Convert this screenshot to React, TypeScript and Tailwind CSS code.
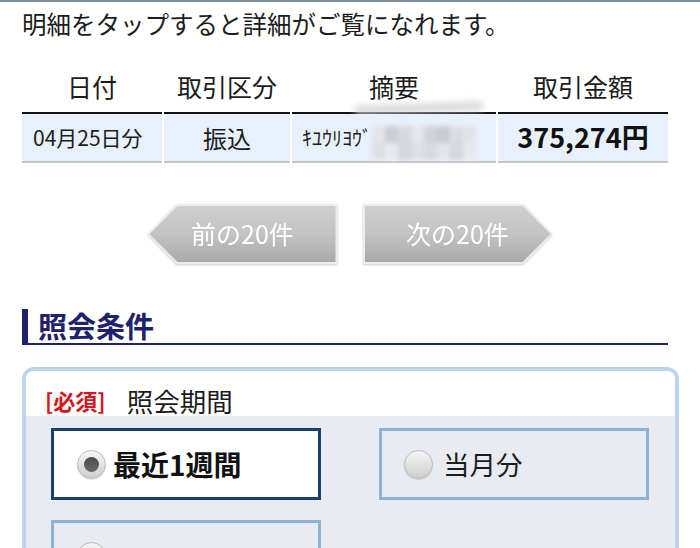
import React from "react";

const mosaic = [
  "bg-[#e4e5eb]", "bg-[#cdced5]", "bg-[#d8d9df]", "bg-[#e6e7ec]", "bg-[#d1d2d9]", "bg-[#cbccd3]", "bg-[#dcdde3]", "bg-[#e3e4e9]",
  "bg-[#dfe0e6]", "bg-[#e8e9ee]", "bg-[#d5d6dc]", "bg-[#e0e1e6]", "bg-[#d9dae0]", "bg-[#e5e6ea]", "bg-[#d6d7dd]", "bg-[#e7e8ec]",
];

function Radio({ checked }: { checked?: boolean }) {
  return (
    <span className="w-[29px] h-[29px] shrink-0 rounded-full border border-[#b9b9b9] bg-linear-to-b from-[#f7f7f7] to-[#cdcdcd] shadow-[0_1px_1px_rgba(0,0,0,0.12)] flex items-center justify-center">
      {checked && <span className="w-[15px] h-[15px] rounded-full bg-linear-to-b from-[#4a4a4a] to-[#6a6a6a]" />}
    </span>
  );
}

export default function App() {
  return (
    <div className="w-[700px] h-[548px] overflow-hidden bg-white border-t-2 border-[#7a8d9b] font-['Noto_Sans_CJK_JP','Noto_Sans',sans-serif] text-[#1c1c1c]">
      <div className="px-[22px]">
        <p className="mt-[5px] text-[24.5px] leading-[34px]">明細をタップすると詳細がご覧になれます。</p>

        <div className="mt-[21px] w-[646px]">
          <div className="flex gap-[2px] text-[25px]">
            <div className="w-[140px] h-[52px] border-b-2 border-[#111] flex items-center justify-center">日付</div>
            <div className="w-[126px] h-[52px] border-b-2 border-[#111] flex items-center justify-center">取引区分</div>
            <div className="relative w-[204px] h-[52px] border-b-2 border-[#111] flex items-center justify-center">
              摘要
              <span className="absolute left-[62px] bottom-[-1px] w-[130px] h-[10px] rounded-full bg-[#d4d4d4] blur-[3px] opacity-80 rotate-[-2deg]" />
            </div>
            <div className="w-[170px] h-[52px] border-b-2 border-[#111] flex items-center justify-center">取引金額</div>
          </div>
          <div className="flex gap-[2px]">
            <div className="w-[140px] h-[49px] border-b-2 border-[#c2c5c9] bg-[#e8f0fb] flex items-center pl-[11px] text-[21px]">04月25日分</div>
            <div className="w-[126px] h-[49px] border-b-2 border-[#c2c5c9] bg-[#e8f0fb] flex items-center justify-center text-[24px]">振込</div>
            <div className="relative w-[204px] h-[49px] border-b-2 border-[#c2c5c9] bg-[#e8f0fb] flex items-center pl-[10px] text-[20px]">
              ｷﾕｳﾘﾖｳﾞ
              <div className="absolute left-[80px] top-[12px] grid grid-cols-8 blur-[2px]">
                {mosaic.map((c, i) => (
                  <span key={i} className={`w-[13px] h-[17px] ${c}`} />
                ))}
              </div>
            </div>
            <div className="w-[170px] h-[49px] border-b-2 border-[#c2c5c9] bg-[#e8f0fb] flex items-center justify-center text-[27px] font-bold text-[#111]">375,274円</div>
          </div>
        </div>

        <div className="mt-[41px] flex justify-center gap-[25px] drop-shadow-[0_1px_1px_rgba(0,0,0,0.2)]">
          <div className="w-[190px] h-[60px] bg-[#ececec] p-[2px] [clip-path:polygon(29px_0,100%_0,100%_100%,29px_100%,0_50%)]">
            <div className="w-full h-full bg-linear-to-b from-[#cfcfcf] via-[#c3c3c3] to-[#a9a9a9] [clip-path:polygon(28px_0,100%_0,100%_100%,28px_100%,0_50%)] flex items-center justify-center text-white text-[25px]">
              前の20件
            </div>
          </div>
          <div className="w-[190px] h-[60px] bg-[#ececec] p-[2px] [clip-path:polygon(0_0,calc(100%-29px)_0,100%_50%,calc(100%-29px)_100%,0_100%)]">
            <div className="w-full h-full bg-linear-to-b from-[#cfcfcf] via-[#c3c3c3] to-[#a9a9a9] [clip-path:polygon(0_0,calc(100%-28px)_0,100%_50%,calc(100%-28px)_100%,0_100%)] flex items-center justify-center text-white text-[25px]">
              次の20件
            </div>
          </div>
        </div>

        <div className="mt-[45px] w-[646px] border-b-2 border-[#1e226e]">
          <div className="h-[34px] border-l-[6px] border-[#1e226e] pl-[10px] flex items-center text-[29px] font-bold text-[#1e226e]">照会条件</div>
        </div>

        <div className="mt-[22px] w-[657px] border-4 border-[#bed4ee] rounded-[12px] overflow-hidden">
          <div className="h-[45px] bg-white flex items-center pl-[19px] pt-[14px]">
            <span className="text-[22px] font-bold text-[#d6161c]">[必須]</span>
            <span className="ml-[21px] text-[26.5px]">照会期間</span>
          </div>
          <div className="bg-[#e8ecf2] pt-[12px] pb-[20px] pl-[25px] pr-[26px] grid grid-cols-[270px_270px] gap-x-[58px] gap-y-[20px]">
            <div className="h-[72px] border-[3px] border-[#1c3e6a] bg-white flex items-center pl-[23px] gap-[7px]">
              <Radio checked />
              <span className="text-[28px] font-bold text-[#111]">最近1週間</span>
            </div>
            <div className="h-[72px] border-[3px] border-[#8cb3d2] flex items-center pl-[22px] gap-[10px]">
              <Radio />
              <span className="text-[26.5px]">当月分</span>
            </div>
            <div className="h-[72px] border-[3px] border-[#8cb3d2] flex items-center pl-[23px] gap-[7px]">
              <Radio />
            </div>
          </div>
        </div>
      </div>
    </div>
  );
}
